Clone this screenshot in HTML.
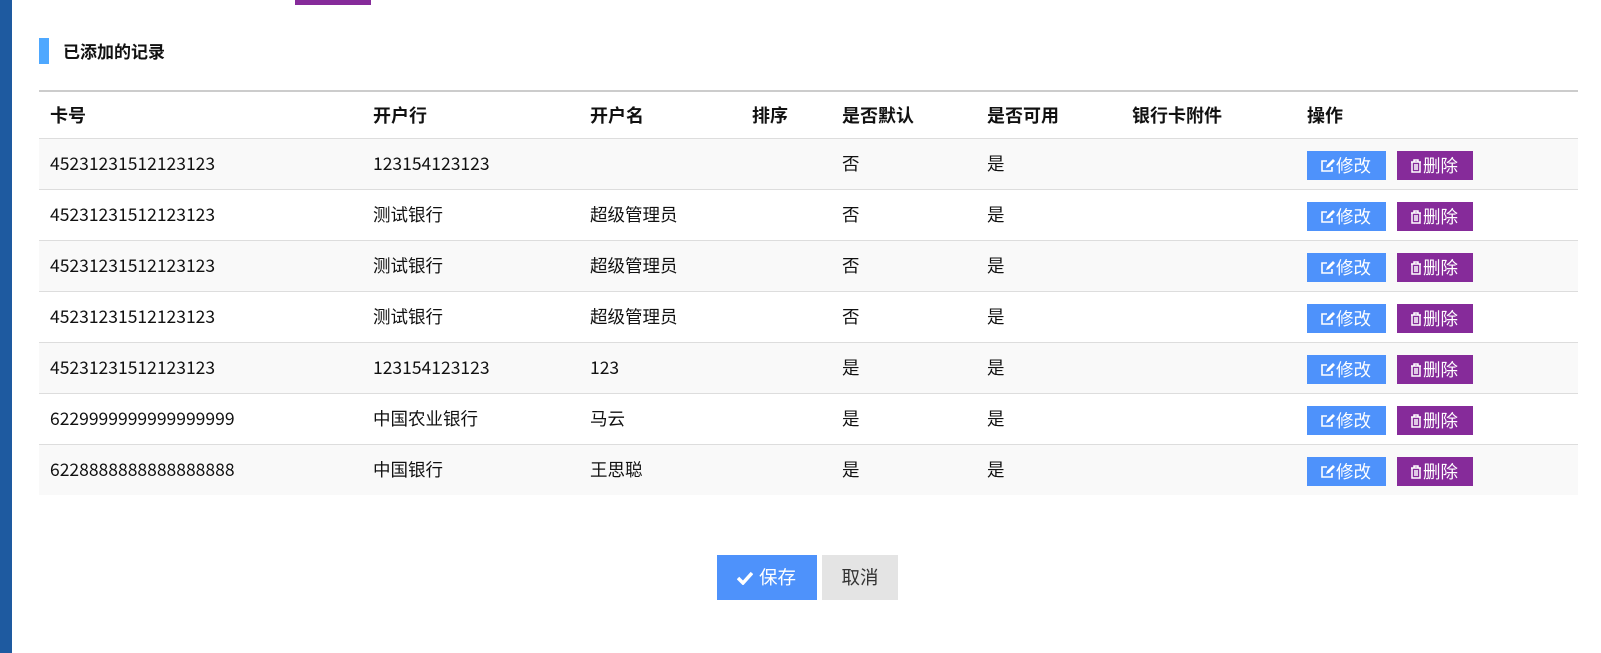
<!DOCTYPE html>
<html><head><meta charset="utf-8"><style>
*{margin:0;padding:0;box-sizing:border-box}
body{width:1601px;height:653px;background:#fff;font-family:"Noto Sans CJK SC","Liberation Sans",sans-serif;font-size:17.5px;color:#111;position:relative;overflow:hidden}
.lb{position:absolute;left:0;top:0;width:12px;height:653px;background:#1e5aa0}
.tab{position:absolute;left:295px;top:0;width:76px;height:5px;background:#862b9a}
.tbar{position:absolute;left:39px;top:38px;width:10px;height:26px;background:#4ea8ff}
.title{position:absolute;left:63px;top:38px;font-size:17px;font-weight:bold;line-height:26px}
table{position:absolute;left:39px;top:90px;width:1539px;border-collapse:collapse;border-top:2px solid #ccc;table-layout:fixed}
th{height:47px;text-align:left;font-weight:bold;padding:0 11px;font-size:18px;border-bottom:1px solid #ddd}
td{height:51px;padding:0 11px;border-bottom:1px solid #ddd;vertical-align:middle;line-height:22px;white-space:nowrap}
tr:last-child td{border-bottom:none}
tbody tr:nth-child(odd){background:#f9f9f9}
.b{display:inline-block;height:29px;line-height:29px;color:#fff;font-size:17.5px;vertical-align:middle;position:relative;margin-top:3px}
.e{background:#4e92fb;width:79px;margin-right:11px;padding-left:29px}
.d{background:#862b9a;width:76px;padding-left:26px}
.b svg{position:absolute;left:13px;top:8px}
.btns{position:absolute;top:555px;height:45px;line-height:45px;font-size:18.5px}
.s{left:717px;width:100px;background:#4e92fb;color:#fff;padding-left:42px}
.c{left:822px;width:76px;background:#e4e4e4;color:#333;text-align:center}
</style></head><body>
<div class="lb"></div><div class="tab"></div>
<div class="tbar"></div><div class="title">已添加的记录</div>
<table>
<colgroup><col style="width:323px"><col style="width:217px"><col style="width:162px"><col style="width:90px"><col style="width:145px"><col style="width:145px"><col style="width:175px"><col></colgroup>
<thead><tr><th>卡号</th><th>开户行</th><th>开户名</th><th>排序</th><th>是否默认</th><th>是否可用</th><th>银行卡附件</th><th>操作</th></tr></thead>
<tbody>
<tr><td>45231231512123123</td><td>123154123123</td><td></td><td></td><td>否</td><td>是</td><td></td><td><span class="b e">修改</span><span class="b d">删除</span></td></tr>
<tr><td>45231231512123123</td><td>测试银行</td><td>超级管理员</td><td></td><td>否</td><td>是</td><td></td><td><span class="b e">修改</span><span class="b d">删除</span></td></tr>
<tr><td>45231231512123123</td><td>测试银行</td><td>超级管理员</td><td></td><td>否</td><td>是</td><td></td><td><span class="b e">修改</span><span class="b d">删除</span></td></tr>
<tr><td>45231231512123123</td><td>测试银行</td><td>超级管理员</td><td></td><td>否</td><td>是</td><td></td><td><span class="b e">修改</span><span class="b d">删除</span></td></tr>
<tr><td>45231231512123123</td><td>123154123123</td><td>123</td><td></td><td>是</td><td>是</td><td></td><td><span class="b e">修改</span><span class="b d">删除</span></td></tr>
<tr><td>6229999999999999999</td><td>中国农业银行</td><td>马云</td><td></td><td>是</td><td>是</td><td></td><td><span class="b e">修改</span><span class="b d">删除</span></td></tr>
<tr><td>6228888888888888888</td><td>中国银行</td><td>王思聪</td><td></td><td>是</td><td>是</td><td></td><td><span class="b e">修改</span><span class="b d">删除</span></td></tr>
</tbody></table>
<div class="btns s"><svg style="position:absolute;left:20px;top:16px" width="16" height="14" viewBox="0 0 16 14"><path d="M1 7l5 5L15 2" stroke="#fff" stroke-width="3.5" fill="none"/></svg>保存</div>
<div class="btns c">取消</div>
<script>
document.querySelectorAll('.e').forEach(function(e){e.insertAdjacentHTML('afterbegin','<svg width="15" height="14" viewBox="0 0 15 14"><path d="M7 2H2v10h10V8" stroke="#fff" stroke-width="1.6" fill="none"/><path d="M6 9l1-3 6-6 2 2-6 6z" fill="#fff"/></svg>')});
document.querySelectorAll('.d').forEach(function(e){e.insertAdjacentHTML('afterbegin','<svg width="12" height="14" viewBox="0 0 12 14"><path d="M1 3h10M4 3V1h4v2M2 3v10h8V3M5 5v6M7 5v6" stroke="#fff" stroke-width="1.5" fill="none"/></svg>')});
</script>
</body></html>
